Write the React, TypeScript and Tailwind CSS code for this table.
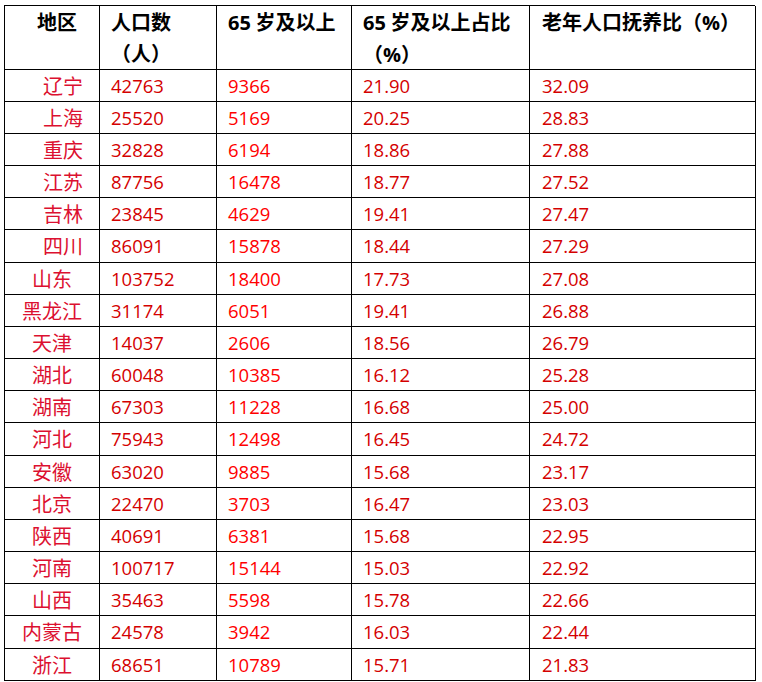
const ROWS = [
  { region: "辽宁", pop: "42763", old: "9366", ratio: "21.90", dep: "32.09", indent: true },
  { region: "上海", pop: "25520", old: "5169", ratio: "20.25", dep: "28.83", indent: true },
  { region: "重庆", pop: "32828", old: "6194", ratio: "18.86", dep: "27.88", indent: true },
  { region: "江苏", pop: "87756", old: "16478", ratio: "18.77", dep: "27.52", indent: true },
  { region: "吉林", pop: "23845", old: "4629", ratio: "19.41", dep: "27.47", indent: true },
  { region: "四川", pop: "86091", old: "15878", ratio: "18.44", dep: "27.29", indent: true },
  { region: "山东", pop: "103752", old: "18400", ratio: "17.73", dep: "27.08", indent: false },
  { region: "黑龙江", pop: "31174", old: "6051", ratio: "19.41", dep: "26.88", indent: false },
  { region: "天津", pop: "14037", old: "2606", ratio: "18.56", dep: "26.79", indent: false },
  { region: "湖北", pop: "60048", old: "10385", ratio: "16.12", dep: "25.28", indent: false },
  { region: "湖南", pop: "67303", old: "11228", ratio: "16.68", dep: "25.00", indent: false },
  { region: "河北", pop: "75943", old: "12498", ratio: "16.45", dep: "24.72", indent: false },
  { region: "安徽", pop: "63020", old: "9885", ratio: "15.68", dep: "23.17", indent: false },
  { region: "北京", pop: "22470", old: "3703", ratio: "16.47", dep: "23.03", indent: false },
  { region: "陕西", pop: "40691", old: "6381", ratio: "15.68", dep: "22.95", indent: false },
  { region: "河南", pop: "100717", old: "15144", ratio: "15.03", dep: "22.92", indent: false },
  { region: "山西", pop: "35463", old: "5598", ratio: "15.78", dep: "22.66", indent: false },
  { region: "内蒙古", pop: "24578", old: "3942", ratio: "16.03", dep: "22.44", indent: false },
  { region: "浙江", pop: "68651", old: "10789", ratio: "15.71", dep: "21.83", indent: false },
]

const cjk = "font-['Noto_Sans_CJK_SC','Noto_Sans',sans-serif]"
const num = "font-['Open_Sans','Liberation_Sans',sans-serif]"

export default function App() {
  return (
    <div className="min-h-[682px] bg-white pl-[4px] pt-[5px]">
      <div className="grid w-[751px] grid-cols-[95px_117px_135px_178px_226px] border-l border-t border-black">
        {/* Header */}
        <div className={`h-[64px] border-b border-r border-black text-center text-[20px] font-bold leading-[31px] text-black ${cjk}`}>
          <span className="pl-[10px]">地区</span>
        </div>
        <div className={`h-[64px] border-b border-r border-black px-[11px] text-[20px] font-bold leading-[31px] text-black ${cjk}`}>
          人口数
          <br />
          （人）
        </div>
        <div className={`h-[64px] border-b border-r border-black px-[11px] text-[20px] font-bold leading-[31px] text-black ${cjk}`}>
          <span className={num}>65</span> 岁及以上
        </div>
        <div className={`h-[64px] border-b border-r border-black px-[11px] text-[20px] font-bold leading-[31px] text-black ${cjk}`}>
          <span className={num}>65</span> 岁及以上占比
          <br />
          （<span className={num}>%</span>）
        </div>
        <div className={`h-[64px] whitespace-nowrap border-b border-r border-black px-[12px] text-[20px] font-bold leading-[31px] text-black ${cjk}`}>
          老年人口抚养比（<span className={num}>%</span>）
        </div>

        {/* Rows */}
        {ROWS.map((row, i) => {
          const h = i % 6 === 5 ? "h-[33px]" : "h-[32px]"
          return (
            <div key={row.region} className="contents">
              <div
                className={`flex ${h} items-center justify-center border-b border-r border-black text-[20px] text-[#dc1030] ${cjk} ${
                  row.indent ? "pl-[22px]" : ""
                }`}
              >
                {row.region}
              </div>
              <div className={`flex ${h} items-center border-b border-r border-black px-[11px] text-[18.5px] text-[#d40000] ${num}`}>
                {row.pop}
              </div>
              <div className={`flex ${h} items-center border-b border-r border-black px-[11px] text-[18.5px] text-[#ff0000] ${num}`}>
                {row.old}
              </div>
              <div className={`flex ${h} items-center border-b border-r border-black px-[11px] text-[18.5px] text-[#d40000] ${num}`}>
                {row.ratio}
              </div>
              <div className={`flex ${h} items-center border-b border-r border-black px-[12px] text-[18.5px] text-[#d40000] ${num}`}>
                {row.dep}
              </div>
            </div>
          )
        })}
      </div>
    </div>
  )
}
